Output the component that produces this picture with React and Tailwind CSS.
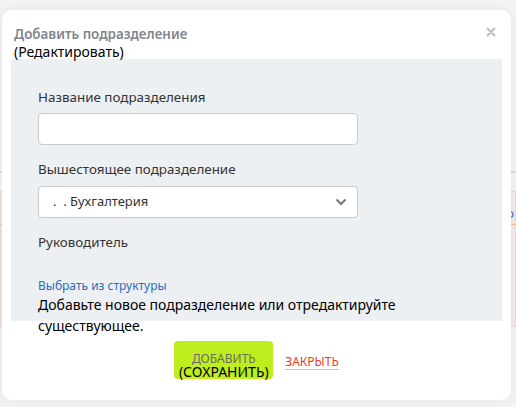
import React from 'react';

const font = { fontFamily: '"Noto Sans", "Open Sans", sans-serif' };

const App = () => {
  return (
    <div className="relative w-[516px] h-[407px] overflow-hidden bg-[#f3f3f3]" style={font}>
      {/* page content behind the modal */}
      <div className="pt-[171px]">
        <div className="h-[2px] bg-[#d9d9d9]" />
        <div className="mt-[18px] h-[136px] border border-[#ecd9cf] bg-[#f2ebe7]">
          <div className="h-[32px] flex items-end justify-end pr-[1px] text-[13px] text-[#2a6ebb]">Ф</div>
          <div className="h-[1px] bg-[#f0b894]" />
        </div>
      </div>

      {/* modal */}
      <div className="absolute left-[2px] top-[10px] w-[509px] h-[390px] rounded-[10px] bg-white shadow-[0_0_12px_rgba(0,0,0,0.06)] flex flex-col">
        <div className="relative h-[49px] pl-[12px] pt-[15px] leading-[18px]">
          <div className="text-[13.4px] font-semibold text-[#80868c]">Добавить подразделение</div>
          <div className="relative z-10 text-[14px] text-black">(Редактировать)</div>
          <button className="absolute right-[15px] top-[17px] text-[#bdbdbd]">
            <svg width="10" height="10" viewBox="0 0 10 10">
              <path d="M1.5 1.5 L8.5 8.5 M8.5 1.5 L1.5 8.5" stroke="currentColor" strokeWidth="2" strokeLinecap="round" />
            </svg>
          </button>
        </div>

        <div className="mx-[9px] h-[262px] bg-[#edf0f3] px-[27px] pt-[28px] text-[13.4px]">
          <div className="text-[#333] leading-[20px]">Название подразделения</div>
          <input className="mt-[6px] block w-[320px] h-[32px] rounded-[4px] border border-[#c8ccd0] bg-white" />
          <div className="mt-[14px] text-[#333] leading-[20px]">Вышестоящее подразделение</div>
          <div className="mt-[7px] w-[320px] h-[32px] rounded-[4px] border border-[#c8ccd0] bg-white flex items-center justify-between pl-[14px] pr-[10px]">
            <span className="text-[#333] text-[13px]">.&nbsp;&nbsp;. Бухгалтерия</span>
            <svg width="12" height="8" viewBox="0 0 12 8">
              <path d="M1.5 1.5 L6 6 L10.5 1.5" fill="none" stroke="#6f7780" strokeWidth="2" />
            </svg>
          </div>
          <div className="mt-[14px] text-[#333] leading-[20px]">Руководитель</div>
          <div className="mt-[26px] text-[12px] leading-[16px] text-[#2a6ebb]">Выбрать из структуры</div>
          <div className="w-[400px] text-[14px] leading-[21px] text-black">
            Добавьте новое подразделение или отредактируйте существующее.
          </div>
        </div>

        <div className="mt-[20px] flex items-start justify-center gap-[12px]">
          <button className="w-[99px] h-[38px] rounded-[4px] bg-[#bfee1e] pt-[11px] flex flex-col items-center leading-[13px]">
            <span className="text-[12px] text-[#6b6b6b]">ДОБАВИТЬ</span>
            <span className="text-[14px] leading-[14px] text-black">(СОХРАНИТЬ)</span>
          </button>
          <button className="mt-[13px] text-[12px] leading-[15px] text-[#ea3b2a] border-b border-[#f6aaa0]">ЗАКРЫТЬ</button>
        </div>
      </div>
    </div>
  );
};

export default App;
